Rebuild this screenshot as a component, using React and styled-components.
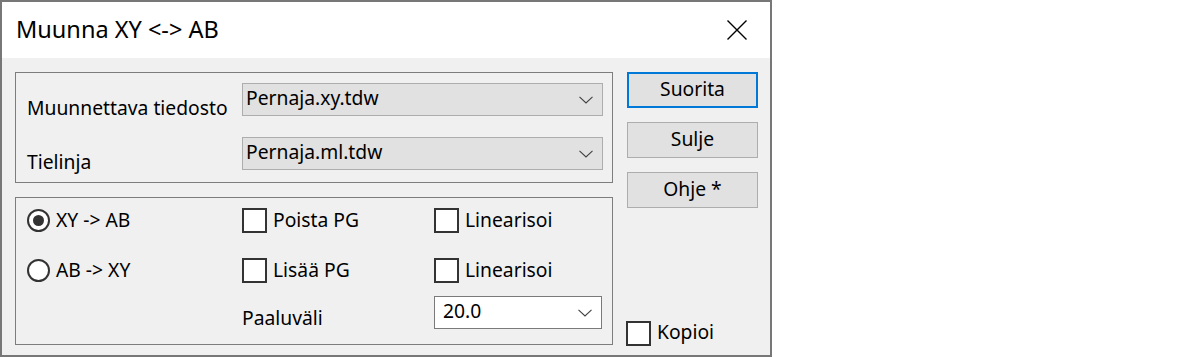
import React from "react";
import styled, { createGlobalStyle } from "styled-components";

const Global = createGlobalStyle`
  html, body { margin: 0; padding: 0; background: #ffffff; }
  body { font-family: "Noto Sans", "Open Sans", sans-serif; color: #000; }
`;

const Dialog = styled.div`
  width: 772px;
  height: 357px;
  box-sizing: border-box;
  border: 2px solid #777777;
  background: #f0f0f0;
  display: flex;
  flex-direction: column;
`;

const TitleBar = styled.div`
  height: 56px;
  background: #ffffff;
  display: flex;
  align-items: center;
  justify-content: space-between;
  padding: 0 23px 0 14px;
  flex-shrink: 0;
`;

const Title = styled.div`
  font-size: 23.5px;
  padding-bottom: 2px;
`;

const CloseIcon = styled.svg`
  width: 20px;
  height: 20px;
  display: block;
  margin-top: -1px;
`;

const Body = styled.div`
  flex: 1;
  display: flex;
  gap: 14px;
  padding: 14px 13px 10px 13px;
`;

const LeftColumn = styled.div`
  width: 598px;
  display: flex;
  flex-direction: column;
  gap: 14px;
`;

const Group = styled.div`
  box-sizing: border-box;
  border: 1px solid #7d7d7d;
  height: ${(p) => p.$h}px;
`;

const FileGrid = styled.div`
  display: grid;
  grid-template-columns: 216px 361px;
  row-gap: 17px;
  padding: 10px 9px 0 10px;
`;

const Label = styled.div`
  font-size: 19.3px;
  line-height: 24px;
  padding-top: ${(p) => p.$offset || 0}px;
  white-space: nowrap;
`;

const FieldLabel = styled(Label)`
  padding-left: 1px;
`;

const Combo = styled.div`
  box-sizing: border-box;
  height: 33px;
  border: 1px solid ${(p) => (p.$white ? "#7a7a7a" : "#adadad")};
  background: ${(p) => (p.$white ? "#ffffff" : "#e1e1e1")};
  display: flex;
  align-items: center;
  justify-content: space-between;
  padding: 0 9px 0 ${(p) => (p.$white ? 8 : 3)}px;
  font-size: 19.3px;
`;

const ComboText = styled.span`
  line-height: 24px;
  padding-bottom: 3px;
`;

const Chevron = () => (
  <svg width="14" height="8" viewBox="0 0 14 8" style={{ display: "block" }}>
    <path d="M0.5 0.8 L7 7 L13.5 0.8" fill="none" stroke="#404040" strokeWidth="1.1" />
  </svg>
);

const OptionGrid = styled.div`
  display: grid;
  grid-template-columns: 216px 192px 168px;
  grid-template-rows: 25px 25px 25px 33px;
  padding: 10px 9px 0 10px;
`;

const Option = styled.label`
  display: flex;
  align-items: center;
  gap: 6px;
  font-size: 19.3px;
  line-height: 24px;
  white-space: nowrap;
  grid-row: ${(p) => p.$row};
  grid-column: ${(p) => p.$col};
`;

const OptionText = styled.span`
  padding-bottom: 2px;
`;

const Radio = styled.span`
  box-sizing: border-box;
  width: 23px;
  height: 23px;
  border-radius: 50%;
  border: 2px solid #333333;
  background: #ffffff;
  display: flex;
  align-items: center;
  justify-content: center;
  flex-shrink: 0;
  margin-left: 1px;
  &::after {
    content: "";
    width: 11px;
    height: 11px;
    border-radius: 50%;
    background: ${(p) => (p.$checked ? "#333333" : "transparent")};
  }
`;

const Box = styled.span`
  box-sizing: border-box;
  width: 25px;
  height: 25px;
  border: 2px solid #333333;
  background: #ffffff;
  flex-shrink: 0;
`;

const GridCell = styled.div`
  grid-row: ${(p) => p.$row};
  grid-column: ${(p) => p.$col};
`;

const ComboWrap = styled.div`
  margin-top: 13px;
`;

const RightColumn = styled.div`
  width: 131px;
  display: flex;
  flex-direction: column;
  gap: 14px;
`;

const Button = styled.div`
  box-sizing: border-box;
  width: 131px;
  height: 36px;
  background: #e1e1e1;
  border: ${(p) => (p.$default ? "2px solid #0078d7" : "1px solid #adadad")};
  display: flex;
  align-items: center;
  justify-content: center;
  font-size: 19.3px;
  padding-bottom: 3px;
`;

const BottomOption = styled(Option)`
  margin-top: auto;
  margin-bottom: -1px;
  margin-left: -1px;
`;

export default function App() {
  return (
    <>
      <Global />
      <Dialog>
        <TitleBar>
          <Title>Muunna XY &lt;-&gt; AB</Title>
          <CloseIcon viewBox="0 0 20 20">
            <path d="M0.5 0.5 L19.5 19.5 M19.5 0.5 L0.5 19.5" stroke="#000" strokeWidth="1.4" fill="none" />
          </CloseIcon>
        </TitleBar>
        <Body>
          <LeftColumn>
            <Group $h={111}>
              <FileGrid>
                <FieldLabel $offset={13}>Muunnettava tiedosto</FieldLabel>
                <Combo>
                  <ComboText>Pernaja.xy.tdw</ComboText>
                  <Chevron />
                </Combo>
                <FieldLabel $offset={13}>Tielinja</FieldLabel>
                <Combo>
                  <ComboText>Pernaja.ml.tdw</ComboText>
                  <Chevron />
                </Combo>
              </FileGrid>
            </Group>
            <Group $h={148}>
              <OptionGrid>
                <Option $row={1} $col={1}>
                  <Radio $checked />
                  <OptionText>XY -&gt; AB</OptionText>
                </Option>
                <Option $row={1} $col={2}>
                  <Box />
                  <OptionText>Poista PG</OptionText>
                </Option>
                <Option $row={1} $col={3}>
                  <Box />
                  <OptionText>Linearisoi</OptionText>
                </Option>
                <Option $row={3} $col={1}>
                  <Radio />
                  <OptionText>AB -&gt; XY</OptionText>
                </Option>
                <Option $row={3} $col={2}>
                  <Box />
                  <OptionText>Lisää PG</OptionText>
                </Option>
                <Option $row={3} $col={3}>
                  <Box />
                  <OptionText>Linearisoi</OptionText>
                </Option>
                <GridCell $row={4} $col={2}>
                  <Label $offset={23}>Paaluväli</Label>
                </GridCell>
                <GridCell $row={4} $col={3}>
                  <ComboWrap>
                    <Combo $white>
                      <ComboText>20.0</ComboText>
                      <Chevron />
                    </Combo>
                  </ComboWrap>
                </GridCell>
              </OptionGrid>
            </Group>
          </LeftColumn>
          <RightColumn>
            <Button $default>Suorita</Button>
            <Button>Sulje</Button>
            <Button>Ohje *</Button>
            <BottomOption>
              <Box />
              <OptionText>Kopioi</OptionText>
            </BottomOption>
          </RightColumn>
        </Body>
      </Dialog>
    </>
  );
}
